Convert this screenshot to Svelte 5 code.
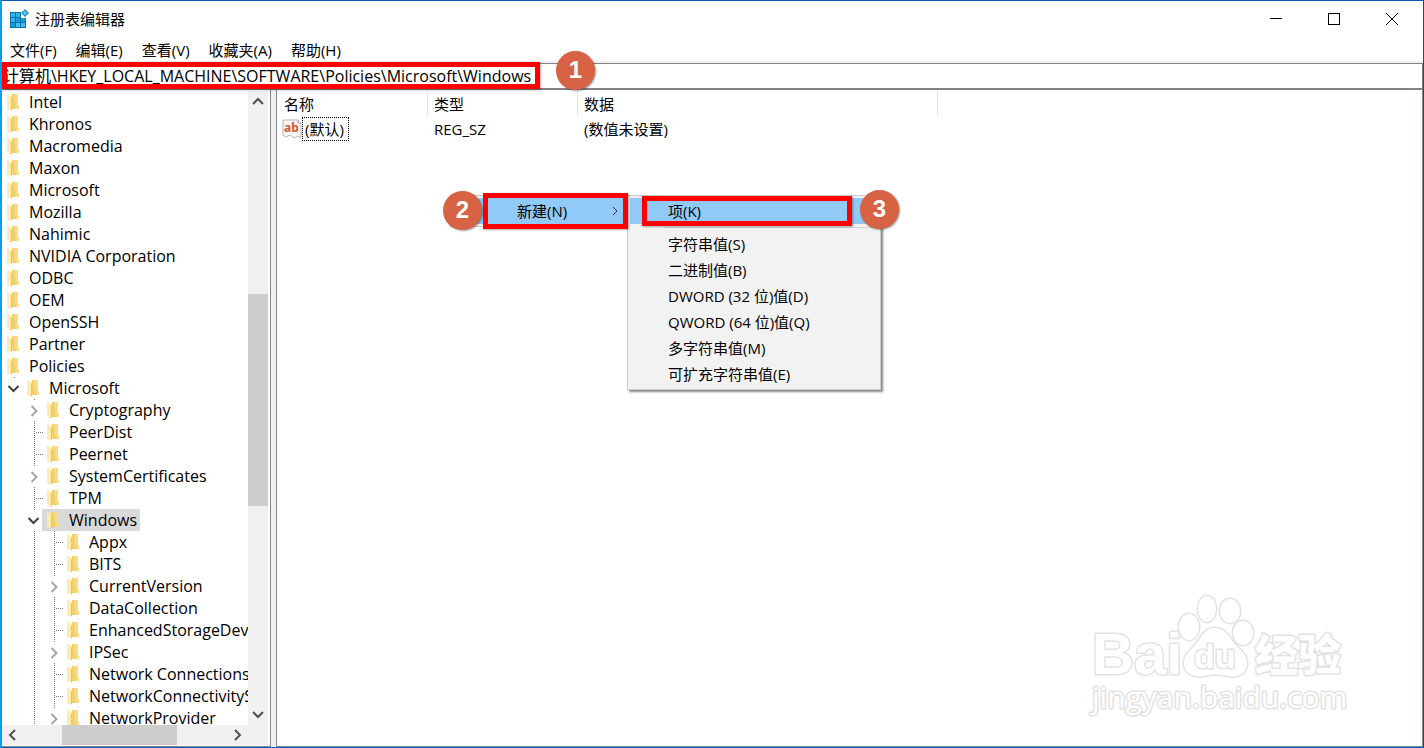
<script>
  const menus = ['文件(F)', '编辑(E)', '查看(V)', '收藏夹(A)', '帮助(H)'];

  const top = ['Intel', 'Khronos', 'Macromedia', 'Maxon', 'Microsoft', 'Mozilla', 'Nahimic',
    'NVIDIA Corporation', 'ODBC', 'OEM', 'OpenSSH', 'Partner', 'Policies'];

  const rows = [
    ...top.map((name) => ({ name, guides: [] })),
    { name: 'Microsoft', guides: ['open'] },
    { name: 'Cryptography', guides: ['none', 'closed'] },
    { name: 'PeerDist', guides: ['none', 'tee'] },
    { name: 'Peernet', guides: ['none', 'tee'] },
    { name: 'SystemCertificates', guides: ['none', 'closed'] },
    { name: 'TPM', guides: ['none', 'tee'] },
    { name: 'Windows', guides: ['none', 'open'], selected: true },
    { name: 'Appx', guides: ['none', 'line', 'tee'] },
    { name: 'BITS', guides: ['none', 'line', 'tee'] },
    { name: 'CurrentVersion', guides: ['none', 'line', 'closed'] },
    { name: 'DataCollection', guides: ['none', 'line', 'tee'] },
    { name: 'EnhancedStorageDevices', guides: ['none', 'line', 'tee'] },
    { name: 'IPSec', guides: ['none', 'line', 'closed'] },
    { name: 'Network Connections', guides: ['none', 'line', 'tee'] },
    { name: 'NetworkConnectivityStatusIndicator', guides: ['none', 'line', 'tee'] },
    { name: 'NetworkProvider', guides: ['none', 'line', 'closed'] }
  ];

  const newItems = ['字符串值(S)', '二进制值(B)', 'DWORD (32 位)值(D)', 'QWORD (64 位)值(Q)',
    '多字符串值(M)', '可扩充字符串值(E)'];

  let path = $state('计算机\\HKEY_LOCAL_MACHINE\\SOFTWARE\\Policies\\Microsoft\\Windows');
</script>

{#snippet arrow(d, label)}
  <button class="arrow" aria-label={label}>
    <svg width="20" height="20" viewBox="0 0 20 20"><path {d} fill="none" stroke="#505050" stroke-width="2" /></svg>
  </button>
{/snippet}

{#snippet guide(kind)}
  <svg class="guide" width="20" height="22" viewBox="0 0 20 22" fill="none">
    {#if kind === 'line' || kind === 'tee'}
      <path d="M12.5 0V22" stroke="#777" stroke-dasharray="1 1" />
    {/if}
    {#if kind === 'tee'}
      <path d="M14 11.500H21" stroke="#777" stroke-dasharray="1 1" />
    {/if}
    {#if kind === 'open'}
      <path d="M12.500 0V1" stroke="#777" />
      <path d="M6.500 9L11.500 14L16.500 9" stroke="#404040" stroke-width="2" />
    {/if}
    {#if kind === 'closed'}
      <path d="M12.500 0V1" stroke="#777" />
      <path d="M9.500 7L14.500 12L9.500 17" stroke="#a6a6a6" stroke-width="2" />
    {/if}
  </svg>
{/snippet}

<div class="window">
  <header class="title">
    <svg width="20" height="20" viewBox="0 0 20 20">
      <path d="M1 3H12V9H17V19H1Z" fill="#0a6ea8" />
      <path d="M2 4H6V8H2ZM7 4H11V8H7ZM2 9H6V13H2Z" fill="#35b4e8" />
      <path d="M7 9H11V13H7ZM2 14H6V18H2ZM12 9H16V13H12Z" fill="#1e9ad6" />
      <path d="M7 14H11V18H7ZM12 14H16V18H12Z" fill="#42bdec" />
      <path d="M16 0L20 4L16 8L12 4Z" fill="#2494c8" />
      <path d="M16 2L18 4L16 6L14 4Z" fill="#6ccdf0" />
    </svg>
    <h1>注册表编辑器</h1>
    <div class="controls">
      <button aria-label="最小化"><svg width="12" height="12"><path d="M0 5.500H12" stroke="#000" /></svg></button>
      <button aria-label="最大化"><svg width="12" height="12"><rect x=".5" y=".5" width="11" height="11" fill="none" stroke="#000" /></svg></button>
      <button aria-label="关闭"><svg width="12" height="12"><path d="M0 0L12 12M12 0L0 12" stroke="#000" /></svg></button>
    </div>
  </header>

  <nav class="menubar">
    {#each menus as m}<button>{m}</button>{/each}
  </nav>

  <div class="address">
    <input aria-label="地址" bind:value={path} spellcheck="false" />
  </div>

  <main>
    <aside>
      <div class="treearea">
        <div class="tree">
          {#each rows as row}
            <div class="row">
              {#each row.guides as g}{@render guide(g)}{/each}
              <button class="node" class:selected={row.selected}>
                <svg width="12" height="18" viewBox="0 0 12 18">
                  <path d="M4 1H10V12L11 13V16H4Z" fill="#f3cf6c" />
                  <path d="M6 1H10V12L11 13V16H8Z" fill="#f8dc86" />
                  <path d="M-1 1H0L4 4V18L-1 16Z" fill="#ffeab0" />
                  <path d="M3.500 4V17" stroke="#e9c565" />
                </svg>
                <span>{row.name}</span>
              </button>
            </div>
          {/each}
        </div>
        <div class="vbar">
          {@render arrow('M5 13L10 8L15 13', '向上滚动')}
          <i style:flex-grow={183}></i><i class="thumb" style:flex-grow={212}></i><i style:flex-grow={199}></i>
          {@render arrow('M5 7L10 12L15 7', '向下滚动')}
        </div>
      </div>
      <div class="hbar">
        {@render arrow('M13 5L8 10L13 15', '向左滚动')}
        <i style:flex-grow={40}></i><i class="thumb" style:flex-grow={115}></i><i style:flex-grow={50}></i>
        {@render arrow('M8 5L13 10L8 15', '向右滚动')}
      </div>
    </aside>

    <section>
      <table>
        <thead>
          <tr><th class="first">名称</th><th class="short">类型</th><th class="long">数据</th><th class="rest"></th></tr>
        </thead>
        <tbody>
          <tr>
            <td>
              <div class="value">
                <svg width="20" height="20" viewBox="0 0 20 20">
                  <path d="M1 1H16L19 4V19L16 17L12 19L8 16L4 18L1 16Z" fill="#f7f7f7" stroke="#b4b4b4" />
                  <path d="M16 1V4H19" fill="#ddd" stroke="#aaa" />
                  <text x="2" y="13" class="ab">ab</text>
                </svg>
                <span class="focus">(默认)</span>
              </div>
            </td>
            <td>REG_SZ</td>
            <td>(数值未设置)</td>
            <td></td>
          </tr>
        </tbody>
      </table>
    </section>
  </main>

  <div class="menu parent">
    <button class="item active">新建(N)
      <svg width="6" height="10" viewBox="0 0 6 10"><path d="M1 1L5 5L1 9" fill="none" stroke="#333" /></svg>
    </button>
  </div>
  <div class="menu sub">
    <button class="item active">项(K)</button>
    <hr />
    {#each newItems as n}<button class="item">{n}</button>{/each}
  </div>

  <div class="frame f1"></div>
  <div class="frame f2"></div>
  <div class="frame f3"></div>
  <div class="badge b1">1</div>
  <div class="badge b2">2</div>
  <div class="badge b3">3</div>

  <svg class="mark" width="264" height="130" viewBox="0 0 264 130">
    <text x="5" y="84" class="latin" font-size="58">Bai</text>
    <ellipse cx="102" cy="37" rx="10" ry="13" />
    <ellipse cx="120" cy="19" rx="9" ry="13" />
    <ellipse cx="143" cy="21" rx="10" ry="12" />
    <ellipse cx="156" cy="43" rx="10" ry="12" />
    <path d="M128 38C137 38 141 45 146 52C152 60 161 64 160 74C159 84 151 88 141 86C132 84 125 84 117 86C106 88 97 83 97 73C97 63 106 59 111 51C116 44 119 38 128 38Z" />
    <text x="107" y="78" class="latin" font-size="34">du</text>
    <text x="168" y="81" class="cjk" font-size="43">经验</text>
    <text x="5" y="118" class="url" font-size="30">jingyan.baidu.com</text>
  </svg>
</div>

<style>
  :global(body) { margin: 0; }
  * { box-sizing: border-box; }
  .window {
    position: relative;
    display: flex;
    flex-direction: column;
    height: 100vh;
    overflow: hidden;
    background: #fff;
    color: #000;
    border-style: solid;
    border-width: 1px 1px 1px 2px;
    border-color: #0b55b4 #0b4aa0 #0b65bb #0aa0e8;
    font: 15px/22px "Open Sans", "Noto Sans CJK SC", sans-serif;
  }
  button { border: 0; padding: 0; background: none; font: inherit; color: inherit; }
  .title { display: flex; align-items: center; height: 36px; flex: none; padding-left: 7px; gap: 6px; }
  h1 { margin: 0; font-size: 15px; font-weight: 400; }
  .controls { display: flex; margin-left: auto; padding-right: 2px; }
  .controls button { width: 58px; height: 36px; display: grid; place-items: center; }
  .menubar { display: flex; gap: 19px; height: 24px; flex: none; padding: 2px 0 0 8px; align-items: center; }
  .address { border-top: 2px solid #f0f0f0; flex: none; }
  .address input {
    display: block; width: 100%; height: 27px; padding: 0 1px 2px; outline: 0;
    border: solid #828287; border-width: 1px 1px 2px 0;
    font: inherit; font-size: 16px; color: inherit; background: #fff;
  }
  main { display: flex; flex: 1; min-height: 0; background: #f0f0f0; }
  aside {
    display: flex; flex-direction: column; width: 269px; flex: none; background: #fff;
    border: solid #828790; border-width: 0 1px 1px 0; padding: 1px 2px 1px 0;
  }
  .treearea { display: flex; flex: 1; min-height: 0; }
  .tree { flex: 1; min-width: 0; overflow: hidden; font-size: 16px; }
  .row { display: flex; height: 22px; }
  .guide { flex: none; overflow: visible; }
  .node { display: flex; align-items: center; gap: 9px; height: 22px; padding: 0 3px 0 6px; white-space: nowrap; }
  .node svg { flex: none; overflow: visible; }
  .selected { background: #d9d9d9; }
  .vbar, .hbar { display: flex; background: #f0f0f0; flex: none; }
  .vbar { flex-direction: column; width: 20px; }
  .hbar { height: 20px; padding-right: 21px; }
  .vbar i, .hbar i { flex-basis: 0; }
  .thumb { background: #cdcdcd; }
  .arrow { width: 20px; height: 20px; flex: none; }
  .arrow svg { display: block; }
  section { flex: 1; min-width: 0; margin-left: 5px; background: #fff; border: solid #828790; border-width: 0 1px 1px; padding-top: 1px; }
  table { width: 100%; table-layout: fixed; border-collapse: separate; border-spacing: 0; text-align: left; }
  th, td { height: 25px; padding: 0 0 0 6px; font-weight: 400; white-space: nowrap; }
  th { border-right: 1px solid #e5e5e5; }
  .first { width: 151px; padding-left: 7px; }
  .short { width: 150px; }
  .long { width: 360px; }
  .rest { border: 0; }
  td:first-child { padding-left: 5px; }
  .value { display: flex; align-items: center; }
  .focus { border: 1px dotted #000; padding: 0 4px 0 2px; }
  .ab { font: 700 12px "Noto Sans", sans-serif; fill: #d9532c; }
  .menu { position: absolute; background: #f2f2f2; border: 1px solid #ccc; padding: 2px; box-shadow: 2px 2px 2px #888; }
  .parent { left: 448px; top: 194px; width: 178px; box-shadow: none; }
  .sub { left: 625px; top: 194px; width: 254px; }
  .item { display: flex; align-items: center; width: 100%; height: 26px; padding-left: 38px; }
  .parent .item { padding: 0 7px 0 64px; justify-content: space-between; }
  .active { background: #91c9f7; }
  hr { margin: 3px 0 3px 34px; border: 0; border-top: 1px solid #d5d5d5; }
  .frame { position: absolute; border: 5px solid #f00; box-shadow: 1px 1px 2px #0005; pointer-events: none; }
  .f1 { left: 0; top: 61px; width: 538px; height: 27px; }
  .f2 { left: 481px; top: 192px; width: 145px; height: 36px; }
  .f3 { left: 640px; top: 195px; width: 210px; height: 30px; }
  .badge {
    position: absolute; width: 39px; height: 39px; border-radius: 50%; background: #d86344; color: #fff;
    font: 700 24px/38px "Liberation Sans", sans-serif; text-align: center; box-shadow: 1px 1px 2px #0006;
  }
  .b1 { left: 554px; top: 50px; }
  .b2 { left: 441px; top: 190px; }
  .b3 { left: 858px; top: 189px; }
  .mark { position: absolute; right: 72px; bottom: 27px; fill: #fff; stroke: #e2e2e2; stroke-width: 3; stroke-linejoin: round; paint-order: stroke; }
  .latin { font-family: "Liberation Sans", sans-serif; font-weight: 700; }
  .cjk { font-family: "Noto Sans CJK SC", sans-serif; font-weight: 900; }
  .url { font-family: "Open Sans", sans-serif; }
</style>
